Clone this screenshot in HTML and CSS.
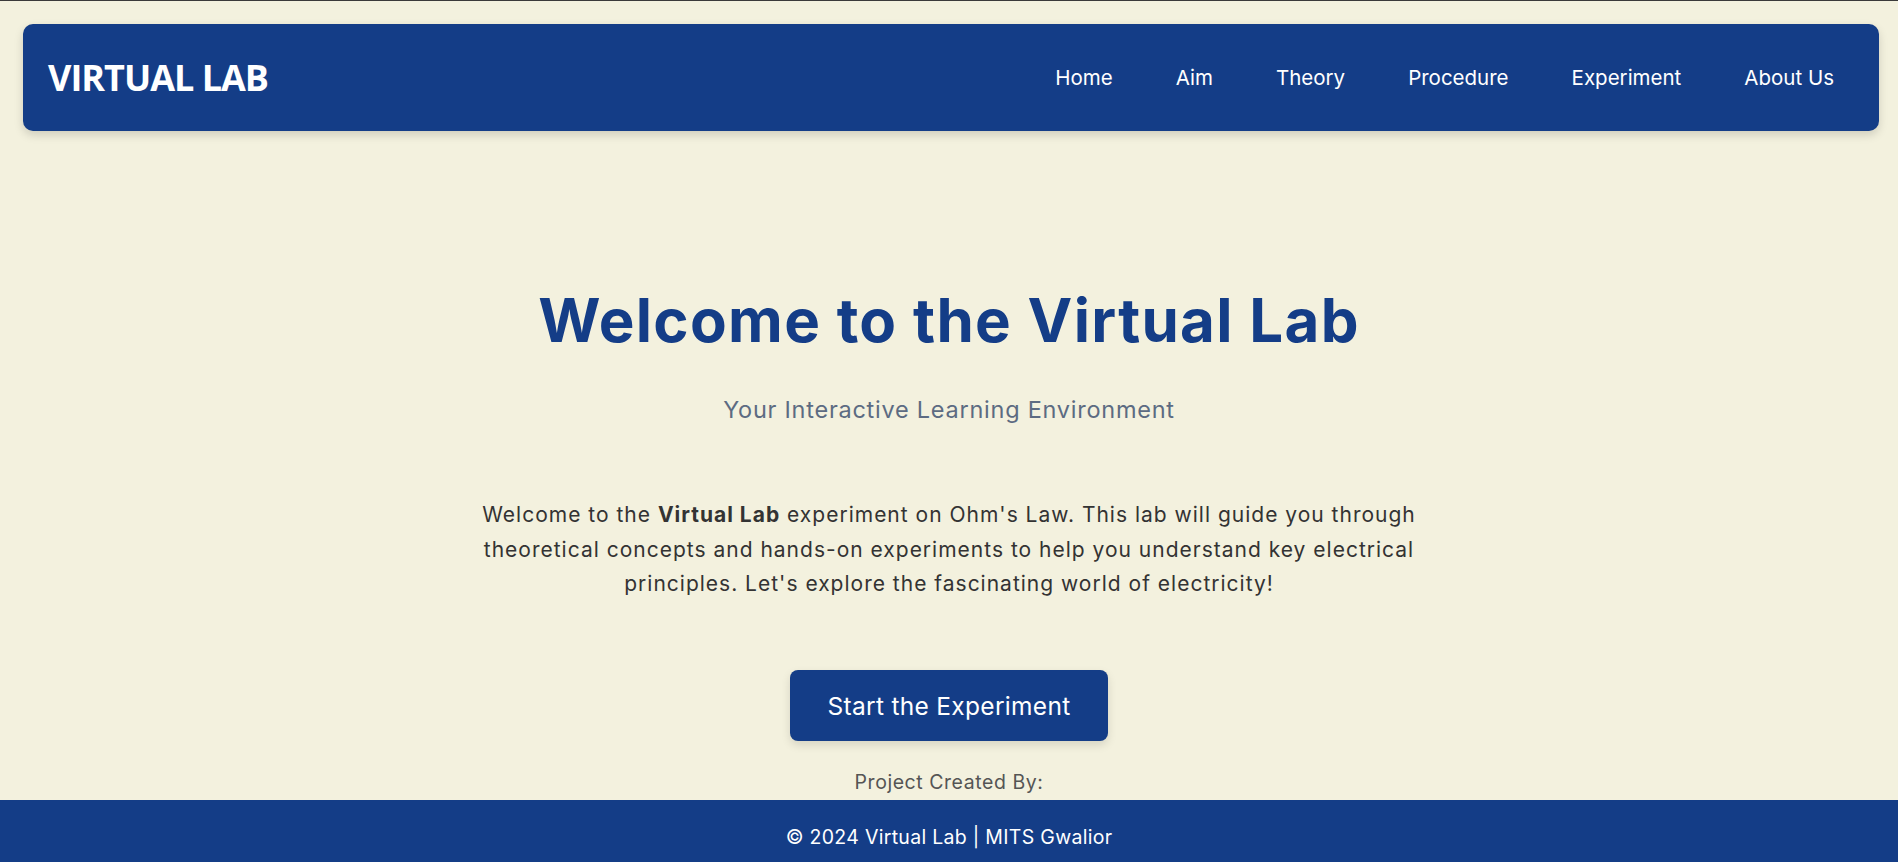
FILE: index.html
```html
<!DOCTYPE html>
<html lang="en">
<head>
<meta charset="UTF-8">
<title>Virtual Lab</title>
<link rel="stylesheet" href="styles.css">
</head>
<body>
<header class="navbar">
  <div class="logo">VIRTUAL LAB</div>
  <nav>
    <ul class="nav-links">
      <li><a href="#">Home</a></li>
      <li><a href="#">Aim</a></li>
      <li><a href="#">Theory</a></li>
      <li><a href="#">Procedure</a></li>
      <li><a href="#">Experiment</a></li>
      <li><a href="#">About Us</a></li>
    </ul>
  </nav>
</header>
<main class="hero">
  <h1 class="hero-title">Welcome to the Virtual Lab</h1>
  <p class="hero-subtitle">Your Interactive Learning Environment</p>
  <p class="hero-text">Welcome to the <strong>Virtual Lab</strong> experiment on Ohm's Law. This lab will guide you through theoretical concepts and hands-on experiments to help you understand key electrical principles. Let's explore the fascinating world of electricity!</p>
  <a class="btn" href="#">Start the Experiment</a>
  <p class="credits">Project Created By:</p>
</main>
<footer class="footer">
  <p>© 2024 Virtual Lab | MITS Gwalior</p>
</footer>
</body>
</html>
```
FILE: styles.css
```css
* { box-sizing: border-box; }
body {
  margin: 0;
  padding-top: 23px;
  border-top: 1px solid #3a3a3a;
  background: #f3f1de;
  font-family: "Inter", "Open Sans", sans-serif;
  color: #333;
}
.navbar {
  margin: 0 19px 0 23px;
  height: 107px;
  padding: 0 25px;
  background: #143d87;
  border-radius: 10px;
  box-shadow: 0 4px 10px rgba(0,0,0,0.15);
  display: flex;
  align-items: center;
  justify-content: space-between;
}
.logo {
  color: #fff;
  font-family: "Open Sans", sans-serif;
  font-weight: 700;
  font-size: 36px;
  letter-spacing: -1px;
  line-height: 1;
}
.nav-links {
  list-style: none;
  margin: 0;
  padding: 0;
  display: flex;
  gap: 23px;
}
.nav-links a {
  display: block;
  padding: 8px 20px;
  color: #fff;
  text-decoration: none;
  font-size: 20.5px;
}
.hero {
  padding-top: 153px;
  text-align: center;
}
.hero-title {
  margin: 0;
  font-size: 60px;
  line-height: 1.2;
  font-weight: 700;
  letter-spacing: 1.3px;
  color: #143d87;
}
.hero-subtitle {
  margin: 38px 0 0;
  font-size: 23.5px;
  line-height: 1.4;
  letter-spacing: 0.75px;
  color: #5c6b82;
}
.hero-text {
  margin: 71px auto 0;
  max-width: 980px;
  font-size: 21px;
  line-height: 34.7px;
  letter-spacing: 1px;
  color: #333;
}
.hero-text strong { font-weight: 700; }
.btn {
  display: inline-block;
  margin-top: 68px;
  padding: 18.5px 38px;
  background: #143d87;
  color: #fff;
  text-decoration: none;
  font-size: 24.5px;
  letter-spacing: 0.3px;
  line-height: 1.4;
  border-radius: 8px;
  box-shadow: 0 4px 10px rgba(0,0,0,0.12);
}
.credits {
  margin: 28px 0 3px;
  font-size: 19.5px;
  letter-spacing: 0.55px;
  line-height: 1.4;
  color: #555;
}
.footer {
  background: #143d87;
  color: #fff;
  text-align: center;
  padding: 24px 0 22px;
}
.footer p {
  margin: 0;
  font-size: 19.5px;
  letter-spacing: 0.3px;
  line-height: 1.4;
}
```
